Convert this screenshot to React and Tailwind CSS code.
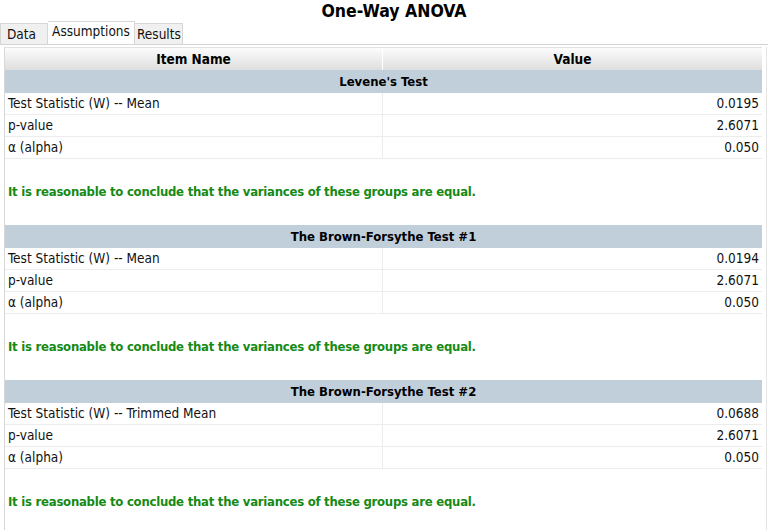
import React from "react";

const sections = [
  {
    title: "Levene's Test",
    rows: [
      ["Test Statistic (W) -- Mean", "0.0195"],
      ["p-value", "2.6071"],
      ["α (alpha)", "0.050"],
    ],
  },
  {
    title: "The Brown-Forsythe Test #1",
    rows: [
      ["Test Statistic (W) -- Mean", "0.0194"],
      ["p-value", "2.6071"],
      ["α (alpha)", "0.050"],
    ],
  },
  {
    title: "The Brown-Forsythe Test #2",
    rows: [
      ["Test Statistic (W) -- Trimmed Mean", "0.0688"],
      ["p-value", "2.6071"],
      ["α (alpha)", "0.050"],
    ],
  },
];

const font = { fontFamily: '"DejaVu Sans Condensed", "DejaVu Sans", sans-serif' };

function Section({ section }) {
  return (
    <div>
      {/* grey-blue band with the test name */}
      <div className="h-[23px] flex items-center justify-center bg-[#c1cfdb] font-bold text-[13px] text-black">
        {section.title}
      </div>
      {section.rows.map(([name, value]) => (
        <div key={name} className="h-[22px] flex border-b border-[#ececec] text-[13.5px] text-[#111]">
          <div className="w-[378px] flex items-center pl-[3px] border-r border-[#ececec]">{name}</div>
          <div className="flex-1 flex items-center justify-end pr-[3px]">{value}</div>
        </div>
      ))}
      <div className="h-[66px] flex items-center pl-[3px] font-bold text-[13px] tracking-[-0.25px] text-[#158a15]">
        It is reasonable to conclude that the variances of these groups are equal.
      </div>
    </div>
  );
}

export default function App() {
  return (
    <div className="w-[768px] h-[530px] overflow-hidden bg-white" style={font}>
      <div className="h-[22px] flex items-center justify-center pl-[20px] text-[17.5px] font-bold text-black">
        One-Way ANOVA
      </div>

      {/* tabs */}
      <div className="h-[23px] flex items-end border-b border-[#d4d4d4] text-[13.5px] text-[#111]">
        <div className="h-[21px] w-[48px] flex items-center pl-[6px] bg-[#f0f0f0] border border-b-0 border-[#d6d6d6]">Data</div>
        <div className="h-[23px] w-[87px] flex items-center justify-center bg-white border-t border-r border-[#d6d6d6] pb-[3px]">Assumptions</div>
        <div className="h-[21px] w-[48px] flex items-center pl-[2px] bg-[#f0f0f0] border-t border-r border-[#d6d6d6]">Results</div>
      </div>

      <div className="flex pl-[4px] pt-[2px]">
        <div className="w-[758px] border-l border-[#d8d8d8]">
          <div className="h-[23px] flex bg-gradient-to-b from-[#fcfcfc] to-[#dedede] border-t border-[#e2e2e2] font-bold text-[13.5px] text-black">
            <div className="w-[378px] flex items-center justify-center border-r border-white">Item Name</div>
            <div className="flex-1 flex items-center justify-center">Value</div>
          </div>
          {sections.map((s) => (
            <Section key={s.title} section={s} />
          ))}
        </div>
        <div className="ml-[4px] w-px h-[500px] bg-[#e4e4e4]" />
      </div>
    </div>
  );
}
